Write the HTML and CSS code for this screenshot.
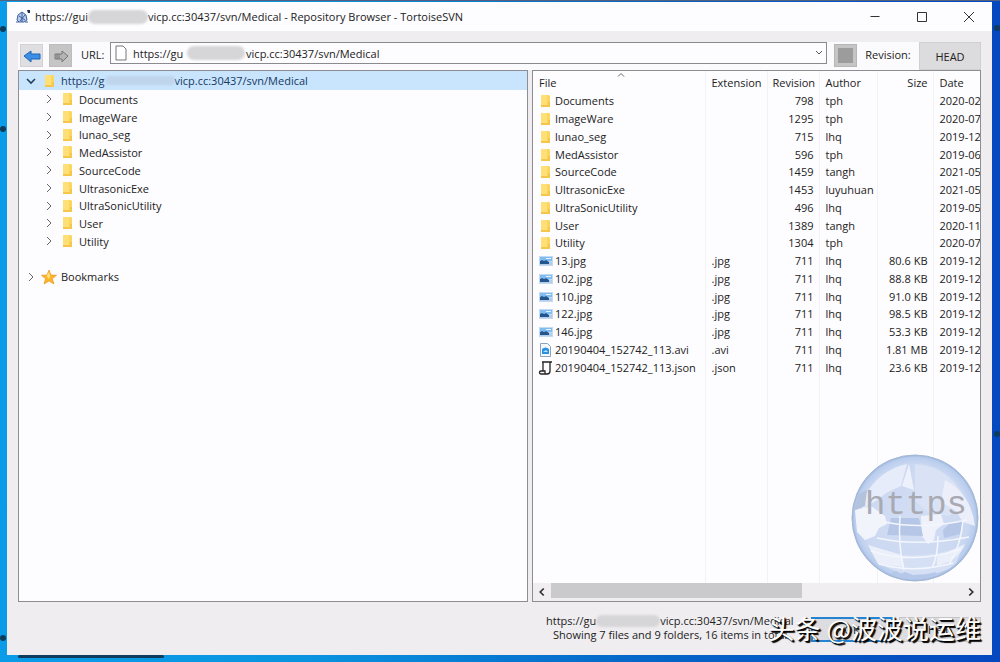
FILE: index.html
```html
<!DOCTYPE html>
<html lang="en">
<head>
    <meta charset="UTF-8">
    <meta name="viewport" content="width=device-width, initial-scale=1.0">
    <title>Repository Browser - TortoiseSVN</title>
    <link rel="stylesheet" href="styles.css">
</head>
<body>
    <!-- shared icons -->
    <svg class="sprites" aria-hidden="true">
        <symbol id="i-folder" viewBox="0 0 16 16">
            <path d="M4 2h8l1 1v11H4z" fill="#fbd55c"/>
            <path d="M4 2h6v12H4z" fill="#ffdf78"/>
            <path d="M11 9h2v5H4v-2h7z" fill="#f6c64a"/>
        </symbol>
        <symbol id="i-image" viewBox="0 0 16 16">
            <path d="M2 3h14v10H2z" fill="#c5daf0"/>
            <path d="M3 4h12v4H3z" fill="#7fbdf0"/>
            <path d="M3 7l3 1 3-1 2 2 4 0v3H3z" fill="#b3cde6"/>
            <path d="M3 8l2-1 2 1 2-1 3 2v2H3z" fill="#23568f"/>
            <path d="M9 5h5v1H9z" fill="#e8f2fb"/>
        </symbol>
        <symbol id="i-video" viewBox="0 0 16 16">
            <path d="M3.500 1.500h7l3 3v10h-10z" fill="#f4f8fc" stroke="#8ba3bd"/>
            <path d="M5 7q3.500-3 7 0v5H5z" fill="#2b90e0"/>
            <path d="M6 10l3-2 2 2z" fill="#b9e2ff"/>
        </symbol>
        <symbol id="i-script" viewBox="0 0 16 16">
            <path d="M5 2h10M6 2v9.500M13 2v9c0 3-2 3-3 3H4c-2 0-2-3 0-3h4v3" fill="none" stroke="#222" stroke-width="1.300"/>
        </symbol>
        <symbol id="i-right" viewBox="0 0 12 12">
            <path d="M4 2l4 4-4 4" fill="none" stroke="#666"/>
        </symbol>
        <symbol id="i-down" viewBox="0 0 12 12">
            <path d="M2 4l4 4 4-4" fill="none" stroke="#23405e" stroke-width="1.600"/>
        </symbol>
    </svg>

    <div class="desktop-label label-left-1"></div>
    <div class="desktop-label label-left-2"></div>
    <div class="desktop-label label-left-3"></div>
    <div class="desktop-label label-right-1"></div>
    <div class="desktop-label label-right-2"></div>
    <div class="desktop-label label-bottom"></div>

    <div class="window">
        <div class="titlebar">
            <svg class="app-icon" viewBox="0 0 16 16">
                <path d="M3 6l4-3 4 3 1 5-3 2H4l-2-2z" fill="#b9cbea" stroke="#3c5f9e"/>
                <path d="M4 7l6 4M10 6l-5 6M7 3v10M1 13h3M10 13h3" stroke="#3c5f9e" fill="none"/>
                <path d="M12 1h3v3h-2z" fill="#1c2c4c"/>
            </svg>
            <span class="address">https://gui</span><span class="smudge smudge-title"></span><span class="title-text">vicp.cc:30437/svn/Medical - Repository Browser - TortoiseSVN</span>
            <div class="window-buttons">
                <button aria-label="Minimize"><svg viewBox="0 0 12 12"><path d="M1.500 5.500h9"/></svg></button>
                <button aria-label="Maximize"><svg viewBox="0 0 12 12"><path d="M1.500 1.500h9v9h-9z"/></svg></button>
                <button aria-label="Close"><svg viewBox="0 0 12 12"><path d="M1 1l10 10M11 1L1 11"/></svg></button>
            </div>
        </div>

        <div class="toolbar">
            <button class="tool" aria-label="Back">
                <svg viewBox="0 0 18 16"><path d="M1 8l7-5v3h9v5H8v3z" fill="#3b8fe6" stroke="#1b66b8"/></svg>
            </button>
            <button class="tool tool-off" aria-label="Forward">
                <svg viewBox="0 0 18 16"><path d="M16 8l-6-5v3H3v5h7v3z" fill="#b4b4b4" stroke="#777"/><path d="M5 6v5M7 6v5" stroke="#777"/></svg>
            </button>
            <label class="url-label" for="url">URL:</label>
            <div class="url-box">
                <svg class="page-icon" viewBox="0 0 12 16"><path d="M1 1h7l3 3v11H1z" fill="#fff" stroke="#777"/></svg>
                <input id="url" type="text" value="https://gu&nbsp;&nbsp;&nbsp;&nbsp;&nbsp;&nbsp;&nbsp;&nbsp;&nbsp;&nbsp;&nbsp;&nbsp;&nbsp;&nbsp;&nbsp;&nbsp;&nbsp;&nbsp;&nbsp;&nbsp;&nbsp;&nbsp;vicp.cc:30437/svn/Medical">
                <span class="smudge smudge-url"></span>
                <button class="url-drop" aria-label="Show history"><svg viewBox="0 0 12 12"><path d="M3 4l3 3 3-3" fill="none" stroke="#555"/></svg></button>
            </div>
            <button class="tool tool-stop" aria-label="Stop"><span></span></button>
            <label class="rev-label" for="head">Revision:</label>
            <button class="head" id="head">HEAD</button>
        </div>

        <div class="panes">
            <ul class="tree">
                <li class="root selected"><svg class="chev"><use href="#i-down"/></svg><svg class="icon"><use href="#i-folder"/></svg><span>https://g</span><span class="smudge smudge-tree"></span><span>vicp.cc:30437/svn/Medical</span></li>
                <li><svg class="chev"><use href="#i-right"/></svg><svg class="icon"><use href="#i-folder"/></svg><span>Documents</span></li>
                <li><svg class="chev"><use href="#i-right"/></svg><svg class="icon"><use href="#i-folder"/></svg><span>ImageWare</span></li>
                <li><svg class="chev"><use href="#i-right"/></svg><svg class="icon"><use href="#i-folder"/></svg><span>lunao_seg</span></li>
                <li><svg class="chev"><use href="#i-right"/></svg><svg class="icon"><use href="#i-folder"/></svg><span>MedAssistor</span></li>
                <li><svg class="chev"><use href="#i-right"/></svg><svg class="icon"><use href="#i-folder"/></svg><span>SourceCode</span></li>
                <li><svg class="chev"><use href="#i-right"/></svg><svg class="icon"><use href="#i-folder"/></svg><span>UltrasonicExe</span></li>
                <li><svg class="chev"><use href="#i-right"/></svg><svg class="icon"><use href="#i-folder"/></svg><span>UltraSonicUtility</span></li>
                <li><svg class="chev"><use href="#i-right"/></svg><svg class="icon"><use href="#i-folder"/></svg><span>User</span></li>
                <li><svg class="chev"><use href="#i-right"/></svg><svg class="icon"><use href="#i-folder"/></svg><span>Utility</span></li>
                <li></li>
                <li class="root"><svg class="chev"><use href="#i-right"/></svg><svg class="icon" viewBox="0 0 16 16"><path d="M8 1l2 5 5.500.300-4.200 3.500L13 15l-5-3-5 3 1.500-5.200L.5 6.300 6 6z" fill="#fbb52a" stroke="#e58a12" stroke-width=".6"/><path d="M8 3l1.200 4L8 10 5.500 7z" fill="#ffe27a"/></svg><span>Bookmarks</span></li>
            </ul>

            <div class="list">
                <div class="list-view">
                    <svg class="sort" viewBox="0 0 8 4"><path d="M1 3.500l3-3 3 3" fill="none" stroke="#667"/></svg>
                    <table>
                        <colgroup><col class="c-file"><col class="c-ext"><col class="c-rev"><col class="c-author"><col class="c-size"><col class="c-date"></colgroup>
                        <thead>
                            <tr><th>File</th><th>Extension</th><th class="num">Revision</th><th>Author</th><th class="num">Size</th><th>Date</th></tr>
                        </thead>
                        <tbody>
                            <tr><td><svg class="icon"><use href="#i-folder"/></svg>Documents</td><td></td><td class="num">798</td><td>tph</td><td></td><td>2020-02</td></tr>
                            <tr><td><svg class="icon"><use href="#i-folder"/></svg>ImageWare</td><td></td><td class="num">1295</td><td>tph</td><td></td><td>2020-07</td></tr>
                            <tr><td><svg class="icon"><use href="#i-folder"/></svg>lunao_seg</td><td></td><td class="num">715</td><td>lhq</td><td></td><td>2019-12</td></tr>
                            <tr><td><svg class="icon"><use href="#i-folder"/></svg>MedAssistor</td><td></td><td class="num">596</td><td>tph</td><td></td><td>2019-06</td></tr>
                            <tr><td><svg class="icon"><use href="#i-folder"/></svg>SourceCode</td><td></td><td class="num">1459</td><td>tangh</td><td></td><td>2021-05</td></tr>
                            <tr><td><svg class="icon"><use href="#i-folder"/></svg>UltrasonicExe</td><td></td><td class="num">1453</td><td>luyuhuan</td><td></td><td>2021-05</td></tr>
                            <tr><td><svg class="icon"><use href="#i-folder"/></svg>UltraSonicUtility</td><td></td><td class="num">496</td><td>lhq</td><td></td><td>2019-05</td></tr>
                            <tr><td><svg class="icon"><use href="#i-folder"/></svg>User</td><td></td><td class="num">1389</td><td>tangh</td><td></td><td>2020-11</td></tr>
                            <tr><td><svg class="icon"><use href="#i-folder"/></svg>Utility</td><td></td><td class="num">1304</td><td>tph</td><td></td><td>2020-07</td></tr>
                            <tr><td><svg class="icon"><use href="#i-image"/></svg>13.jpg</td><td>.jpg</td><td class="num">711</td><td>lhq</td><td class="num">80.6 KB</td><td>2019-12</td></tr>
                            <tr><td><svg class="icon"><use href="#i-image"/></svg>102.jpg</td><td>.jpg</td><td class="num">711</td><td>lhq</td><td class="num">88.8 KB</td><td>2019-12</td></tr>
                            <tr><td><svg class="icon"><use href="#i-image"/></svg>110.jpg</td><td>.jpg</td><td class="num">711</td><td>lhq</td><td class="num">91.0 KB</td><td>2019-12</td></tr>
                            <tr><td><svg class="icon"><use href="#i-image"/></svg>122.jpg</td><td>.jpg</td><td class="num">711</td><td>lhq</td><td class="num">98.5 KB</td><td>2019-12</td></tr>
                            <tr><td><svg class="icon"><use href="#i-image"/></svg>146.jpg</td><td>.jpg</td><td class="num">711</td><td>lhq</td><td class="num">53.3 KB</td><td>2019-12</td></tr>
                            <tr><td><svg class="icon"><use href="#i-video"/></svg>20190404_152742_113.avi</td><td>.avi</td><td class="num">711</td><td>lhq</td><td class="num">1.81 MB</td><td>2019-12</td></tr>
                            <tr><td><svg class="icon"><use href="#i-script"/></svg>20190404_152742_113.json</td><td>.json</td><td class="num">711</td><td>lhq</td><td class="num">23.6 KB</td><td>2019-12</td></tr>
                            <tr class="filler"><td></td><td></td><td></td><td></td><td></td><td></td></tr>
                        </tbody>
                    </table>
                    <svg class="globe" viewBox="0 0 128 128">
                        <defs>
                            <radialGradient id="ball" cx=".5" cy=".5" r=".5">
                                <stop offset="0" stop-color="#d3def4"/>
                                <stop offset=".85" stop-color="#cbd8f1"/>
                                <stop offset=".96" stop-color="#b9cdee"/>
                                <stop offset="1" stop-color="#9db6dc"/>
                            </radialGradient>
                            <clipPath id="ball-clip"><circle cx="64" cy="64" r="61"/></clipPath>
                        </defs>
                        <circle cx="64" cy="64" r="63" fill="url(#ball)" stroke="#a3b7d4"/>
                        <g clip-path="url(#ball-clip)">
                            <path d="M14 42Q28 16 56 10l-6 22-15 7-10 8-14 8z" fill="#e6ecf9"/>
                            <path d="M58 10l5 26-12-4z" fill="#edf1fb"/>
                            <path d="M64 10q38 2 54 44l-2 10-10-8-8 6-20-3-14-12z" fill="#dae3f5"/>
                            <path d="M94 26q26 14 30 46l-12-4-8-12-14-8z" fill="#eceffa"/>
                            <path d="M4 56l16-4 14 10 2 8-8 4-4 8-10 4-8-8z" fill="#f2f4fc"/>
                            <path d="M70 62l20-2 3 10-8 6-2 10-6 4-6-8z" fill="#eff2fb"/>
                            <path d="M40 64l28 0 4 18-36-1zM92 76l6-6 14-4-3 14-16 4z" fill="#b5c6e7"/>
                            <path d="M4 46q4-8 12-10l-2 16-10 4z" fill="#b4c3dd"/>
                            <path d="M18 92q44 18 94 0l-8 20q-38 20-76-3z" fill="#d6e0f4"/>
                            <path d="M17 91l34 10 2 12-26-3zM86 103l28-13q-6 16-28 22z" fill="#eaeffa"/>
                            <path d="M34 68q36 8 82-2M26 84q40 9 92-1M20 97q44 14 90-2M28 110q36 10 74-1M49 62q-2 30 4 54M87 82q0 20-6 32M112 66q-2 26-14 44" fill="none" stroke="#f3f6fd" stroke-width="1.500"/>
                            <path d="M40 119l6-2 3 3 5-2 8 3 14-1 10-2-6 8H48z" fill="#b6c8ea"/>
                        </g>
                        <text x="14" y="60" class="globe-text">https</text>
                    </svg>
                </div>
                <div class="scrollbar">
                    <button aria-label="Scroll left"><svg viewBox="0 0 12 12"><path d="M7.500 3l-3 3 3 3"/></svg></button>
                    <div class="track"><div class="thumb"></div></div>
                    <button aria-label="Scroll right"><svg viewBox="0 0 12 12"><path d="M4.500 3l3 3-3 3"/></svg></button>
                </div>
            </div>
        </div>

        <div class="footer">
            <div class="status">
                <div class="status-url"><span>https://gu</span><span class="smudge smudge-status"></span><span>vicp.cc:30437/svn/Medical</span></div>
                <div class="status-count">Showing 7 files and 9 folders, 16 items in total</div>
            </div>
            <div class="actions">
                <button class="ok">OK</button>
                <button class="help">Help</button>
            </div>
            <div class="watermark">头条 @波波说运维</div>
        </div>
    </div>
</body>
</html>
```
FILE: styles.css
```css
* {
    box-sizing: border-box;
}

body {
    margin: 0;
    height: 100vh;
    padding: 1px 8px 7px 7px;
    display: flex;
    position: relative;
    overflow: hidden;
    background: linear-gradient(to right, #0a9ce8 0%, #0a94e0 30%, #0565c8 65%, #0448c0 100%);
    border-top: 1px solid #55617c;
    font-family: "Open Sans", "Noto Sans", sans-serif;
    font-size: 11px;
    color: #222;
}

button,
input {
    font: inherit;
    color: inherit;
    border: none;
    padding: 0;
    margin: 0;
    background: none;
}

.sprites {
    position: absolute;
    width: 0;
    height: 0;
}

/* bits of the desktop behind the window */
.desktop-label {
    position: absolute;
    background: #0d3c5c;
    height: 6px;
    width: 6px;
    border-radius: 3px;
}

.label-left-1 {
    left: 0;
    top: 25px;
}

.label-left-2 {
    left: 0;
    top: 125px;
}

.label-left-3 {
    left: 0;
    top: 634px;
}

.label-right-1 {
    right: 0;
    top: 24px;
}

.label-right-2 {
    right: 0;
    top: 430px;
}

.label-bottom {
    left: 18px;
    bottom: 4px;
    width: 146px;
    height: 3px;
}

.window {
    flex: 1;
    min-width: 0;
    display: flex;
    flex-direction: column;
    background: #efedf0;
    position: relative;
}

.titlebar {
    display: flex;
    align-items: center;
    height: 29px;
    padding-left: 8px;
    background: #fdfcfe;
    white-space: nowrap;
}

.app-icon {
    width: 16px;
    height: 16px;
    margin-right: 4px;
}

.smudge {
    flex: none;
    background: #d6d5d7;
    border-radius: 8px;
    filter: blur(1px);
}

.smudge-title {
    width: 60px;
    height: 14px;
}

.window-buttons {
    display: flex;
    margin-left: auto;
}

.window-buttons button {
    width: 47px;
    height: 28px;
}

.window-buttons svg {
    width: 12px;
    height: 12px;
    display: block;
    margin: 0 auto;
    fill: none;
    stroke: #333;
}

.toolbar {
    display: flex;
    height: 28px;
    margin: 11px 11px 0;
    background: #fbfafc;
}

.tool {
    width: 23px;
    height: 23px;
    margin: 2px 6px 0 2px;
    display: flex;
    align-items: center;
    justify-content: center;
    background: #dfdee1;
    border: 1px solid #d2d1d4;
}

.tool svg {
    width: 18px;
    height: 16px;
}

.tool-off {
    margin: 2px 0 0;
    background: #c5c5c6;
    border-color: #bdbdbe;
}

.tool-stop {
    margin: 2px 0 0 7px;
    background: #c5c5c6;
    border-color: #b6b6b7;
}

.tool-stop span {
    width: 15px;
    height: 15px;
    background: #9c9c9d;
}

.url-label {
    width: 38px;
    line-height: 26px;
    padding-left: 9px;
}

.url-box {
    flex: 1;
    height: 22px;
    display: flex;
    align-items: center;
    position: relative;
    background: #fdfcfe;
    border: 1px solid #8b8a8f;
}

.page-icon {
    width: 12px;
    height: 16px;
    margin: 0 6px 0 4px;
}

.url-box input {
    flex: 1;
    min-width: 0;
    outline: none;
}

.smudge-url {
    position: absolute;
    left: 76px;
    top: 3px;
    width: 58px;
    height: 14px;
}

.url-drop {
    width: 13px;
    height: 18px;
}

.url-drop svg {
    width: 12px;
    height: 12px;
    display: block;
}

.rev-label {
    width: 62px;
    line-height: 26px;
    text-align: center;
}

.head {
    width: 62px;
    background: #dcdbdd;
    border: 1px solid #d0cfd2;
}

.panes {
    flex: 1;
    min-height: 0;
    display: grid;
    grid-template-columns: 510fr 449fr;
    gap: 4px;
    margin: 0 11px;
}

.tree,
.list {
    background: #fdfcfe;
    border: 1px solid #8e8d94;
    min-width: 0;
}

.tree {
    margin: 0;
    padding: 0;
    list-style: none;
}

.tree li {
    display: flex;
    align-items: center;
    height: 18px;
    padding-left: 24px;
    white-space: nowrap;
}

.tree li:nth-child(4n) {
    height: 17px;
}

.tree .root {
    padding-left: 6px;
}

.tree .selected {
    height: 19px;
    background: #c9e4fd;
    color: #16395e;
}

.chev {
    width: 12px;
    height: 12px;
    margin-right: 4px;
}

.icon {
    width: 16px;
    height: 16px;
    margin-right: 4px;
}

.smudge-tree {
    width: 70px;
    height: 9px;
    background: #bfd5ec;
}

.list {
    display: flex;
    flex-direction: column;
}

.list-view {
    flex: 1;
    min-height: 0;
    position: relative;
    overflow: hidden;
}

.sort {
    position: absolute;
    left: 84px;
    top: 2px;
    width: 8px;
    height: 4px;
}

table {
    table-layout: fixed;
    width: 520px;
    height: 100%;
    border-collapse: collapse;
}

.c-file {
    width: 172px;
}

.c-ext {
    width: 62px;
}

.c-rev {
    width: 52px;
}

.c-author {
    width: 58px;
}

.c-size {
    width: 56px;
}

th,
td {
    height: 18px;
    padding: 0 6px;
    line-height: 16px;
    font-weight: normal;
    text-align: left;
    white-space: nowrap;
    border-right: 1px solid #f3f1f5;
}

th {
    height: 21px;
    padding-top: 3px;
}

tr:nth-child(4n) td {
    height: 17px;
}

td:first-child {
    padding: 0 0 0 4px;
}

.filler td {
    height: auto;
}

td .icon {
    vertical-align: top;
    margin-right: 2px;
}

.num {
    text-align: right;
    padding: 0 5px;
}

th.num {
    padding-top: 3px;
}

.globe {
    position: absolute;
    right: 1px;
    bottom: 1px;
    width: 128px;
    height: 128px;
}

.globe-text {
    font-family: "Liberation Mono", monospace;
    font-size: 34px;
    fill: #a8a9b1;
}

.scrollbar {
    display: flex;
    height: 18px;
    background: #f0eef1;
}

.scrollbar button {
    width: 18px;
}

.scrollbar svg {
    width: 14px;
    height: 14px;
    display: block;
    margin: 0 auto;
    fill: none;
    stroke: #333;
    stroke-width: 1.5;
}

.track {
    flex: 1;
}

.thumb {
    width: 61%;
    height: 15px;
    background: #cac9cb;
}

.footer {
    height: 53px;
    padding: 12px 11px 0 539px;
    position: relative;
    white-space: nowrap;
}

.status {
    line-height: 14px;
}

.status-url {
    display: flex;
    align-items: center;
}

.smudge-status {
    width: 64px;
    height: 12px;
}

.status-count {
    padding-left: 7px;
}

.actions {
    position: absolute;
    right: 11px;
    top: 15px;
    display: flex;
    gap: 6px;
}

.actions button {
    width: 82px;
    height: 25px;
    background: #dddce0;
    border: 1px solid #c5c4c8;
}

.actions .ok {
    border: 2px solid #2584d2;
}

.watermark {
    position: absolute;
    right: 11px;
    top: 10px;
    font-family: "Noto Sans CJK SC", sans-serif;
    font-size: 26px;
    line-height: 32px;
    color: #fff;
    text-shadow: 1px 1px 1px #000, 2px 2px 1px #000;
}
```
